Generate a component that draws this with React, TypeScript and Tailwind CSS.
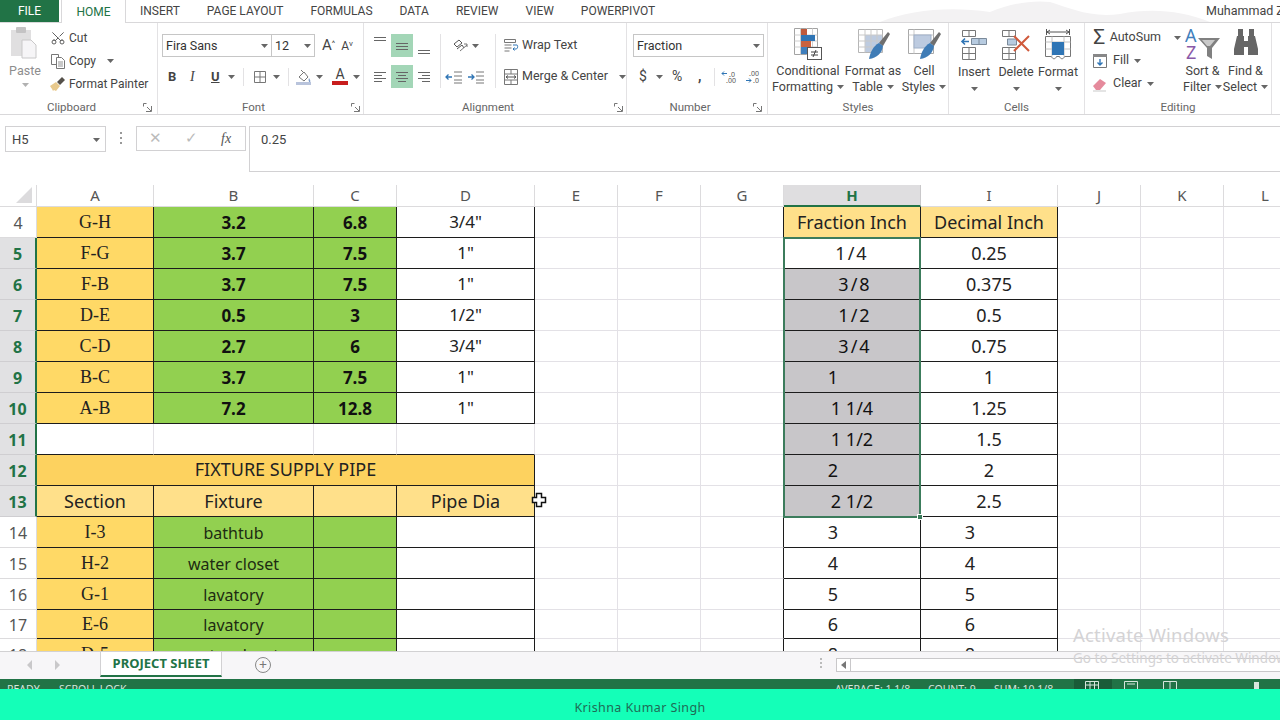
import { Scissors } from "lucide-react";

const ui = "font-['Noto_Sans',sans-serif]";
const rb = "font-['Roboto',sans-serif]";

function Caret({ className = "" }: { className?: string }) {
  return (
    <svg width="7" height="4" viewBox="0 0 7 4" className={`shrink-0 ${className}`}>
      <path d="M0 0h7L3.5 4z" fill="#666" />
    </svg>
  );
}

function PasteIcon() {
  return (
    <svg width="30" height="34" viewBox="0 0 30 34">
      <rect x="1" y="4" width="20" height="26" fill="#e0dfe0" />
      <rect x="6" y="1" width="10" height="6" rx="1" fill="#c4c3c4" />
      <path d="M12 14h9l5 5v13H12z" fill="#f6f5f7" stroke="#c9c8c9" />
    </svg>
  );
}

function CopyIcon() {
  return (
    <svg width="16" height="16" viewBox="0 0 16 16" fill="#fff" stroke="#777" className="shrink-0">
      <path d="M1.5 1.5h7v10h-7z" />
      <path d="M6.5 4.5h5l3 3v8h-8z" />
      <path d="M8 9h5M8 11h5M8 13h5" strokeWidth=".8" />
    </svg>
  );
}

function PainterIcon() {
  return (
    <svg width="16" height="16" viewBox="0 0 16 16" className="shrink-0">
      <path d="M0 10l6-4 4 4-4 5-2-1-1 1-1-2z" fill="#e8c98c" />
      <path d="M7 6l5-5 3 3-5 5z" fill="#55504a" />
    </svg>
  );
}

function Lines({ aligns, y = [] }: { aligns: number[][]; y?: number[] }) {
  return (
    <svg width="16" height="16" viewBox="0 0 16 16" stroke="#666" strokeWidth="1">
      {aligns.map((a, i) => (
        <path key={i} d={`M${a[0]} ${y[i]}.5H${a[1]}`} />
      ))}
    </svg>
  );
}

function Brush() {
  return (
    <>
      <path d="M24 15L33 4l2 2-7 12z" fill="#6f6f6f" />
      <path d="M14 31c1-6 4-13 10-16l4 3c-1 7-6 12-14 13z" fill="#3f7cb6" />
    </>
  );
}

function ConditionalIcon() {
  return (
    <svg width="30" height="32" viewBox="0 0 30 32" className="shrink-0">
      <path d="M1.5 .5h23v26h-23z" fill="#fff" stroke="#a3a3a3" />
      <path d="M1.5 7h23M1.5 13h23M1.5 19h23M7.5 .5v26M13.5 .5v26M19.5 .5v26" stroke="#cfcfcf" />
      <rect x="8" y="1" width="6" height="6" fill="#bf5a3c" />
      <rect x="8" y="7" width="14" height="6" fill="#2f75b5" />
      <rect x="8" y="13" width="10" height="6" fill="#c9623f" />
      <rect x="8" y="19" width="6" height="7" fill="#3f7fbd" />
      <rect x="14.5" y="19.5" width="14" height="12" fill="#fff" stroke="#555" />
      <path d="M18 24h7M18 27h7M23 22l-3 7" stroke="#444" fill="none" />
    </svg>
  );
}

function TableIcon() {
  return (
    <svg width="36" height="32" viewBox="0 0 36 32" className="shrink-0">
      <path d="M3.5 1.5h24v23h-24z" fill="#fff" stroke="#b5b5b5" />
      <rect x="10" y="7" width="17" height="17" fill="#bdcbe0" />
      <path d="M3.5 7h24M3.5 13h24M3.5 19h24M10 1.5v23M16 1.5v23M22 1.5v23" stroke="#c9c9c9" />
      <Brush />
    </svg>
  );
}

function StylesIcon() {
  return (
    <svg width="36" height="32" viewBox="0 0 36 32" className="shrink-0">
      <path d="M2.5 1.5h25v24h-25z" fill="#fff" stroke="#a8a8a8" />
      <path d="M2.5 7h25M8 1.5v24" stroke="#c9c9c9" />
      <rect x="8" y="7" width="17" height="13" fill="#bdcbe0" stroke="#9fb0c8" />
      <Brush />
    </svg>
  );
}

function InsertIcon() {
  return (
    <svg width="28" height="32" viewBox="0 0 28 32" fill="#fff" stroke="#777" className="shrink-0">
      <path d="M2.5 1.5h13v6h-13zM9 1.5v6M2.5 18.5h13v12h-13zM2.5 24.5h13M9 18.5v12" />
      <path d="M11.5 9.5h15v6h-15zM19 9.5v6" fill="#b7cbe0" stroke="#7b8a9a" />
      <path d="M9 12.5H2M5 9.5l-3 3 3 3" stroke="#2f75b5" strokeWidth="1.6" fill="none" />
    </svg>
  );
}

function DeleteIcon() {
  return (
    <svg width="30" height="32" viewBox="0 0 30 32" fill="#fff" stroke="#777" className="shrink-0">
      <path d="M1.5 1.5h13v6h-13zM8 1.5v6M1.5 18.5h13v12h-13zM1.5 24.5h13M8 18.5v12" />
      <path d="M6.5 10h9v6h-9z" fill="#b7cbe0" stroke="#7b8a9a" />
      <path d="M13 7l15 15M28 7L13 22" stroke="#d05a3c" strokeWidth="2" />
    </svg>
  );
}

function FormatIcon() {
  return (
    <svg width="30" height="32" viewBox="0 0 30 32" fill="none" stroke="#777" className="shrink-0">
      <path d="M3.5 0v6M26.5 0v6M4 3h22M7 1l-3 2 3 2M23 1l3 2-3 2" stroke="#555" />
      <path d="M2.5 7.5h25v20h-6c-1 3-4 3-5 0h-3c-1 3-4 3-5 0h-6z" fill="#fff" />
      <path d="M2.5 13h25M2.5 20h25M9 7.5v20M21 7.5v20" stroke="#c2c2c2" />
      <rect x="9" y="13" width="12" height="13" fill="#2f75b5" stroke="none" />
    </svg>
  );
}

function SortIcon() {
  return (
    <svg width="36" height="32" viewBox="0 0 36 32" className="shrink-0">
      <text x="0" y="14" fontSize="18" fontFamily="Noto Sans" fill="#3f7fbd">A</text>
      <text x="1" y="31" fontSize="18" fontFamily="Noto Sans" fill="#8a5aa8">Z</text>
      <path d="M13 10h22l-8 10v11l-5-3v-8z" fill="#808080" />
      <path d="M17 12h13l-5 6h-3z" fill="#c9c9c9" />
    </svg>
  );
}

function BinocularsIcon() {
  return (
    <svg width="26" height="32" viewBox="0 0 26 32" fill="#666" className="shrink-0">
      <rect x="5" y="1" width="5" height="8" />
      <rect x="16" y="1" width="5" height="8" />
      <path d="M4 8h7v5h4V8h7l3 13v6H15v-8h-4v8H1v-6z" />
    </svg>
  );
}

function GroupLabel({ text, launcher = false, right = "right-[3px]" }: { text: string; launcher?: boolean; right?: string }) {
  return (
    <div className={`relative h-[19px] pt-[6px] flex items-center justify-center text-[11.5px] text-[#666] ${launcher ? "pr-[14px]" : ""}`}>
      {text}
      {launcher && (
        <svg width="9" height="9" viewBox="0 0 9 9" className={`absolute top-[8px] ${right}`} fill="none" stroke="#777">
          <path d="M.5.5h3M.5.5v3M8.5 3v5.5H3M4 4l4 4" />
        </svg>
      )}
    </div>
  );
}

function BigButton({ icon, lines, w }: { icon: React.ReactNode; lines: string[]; w: string }) {
  return (
    <div className={`flex flex-col items-center ${w}`}>
      <div className="h-[33px] flex items-center">{icon}</div>
      <div className="mt-[3px] text-[12.5px] leading-[16px] text-[#444] whitespace-nowrap">{lines[0]}</div>
      <div className="text-[12.5px] leading-[16px] text-[#444] whitespace-nowrap flex items-center gap-[4px] h-[16px]">
        {lines[1]}
        <Caret />
      </div>
    </div>
  );
}

function CellButton({ icon, label }: { icon: React.ReactNode; label: string }) {
  return (
    <div className="w-[42px] flex flex-col items-center">
      <div className="h-[33px] flex items-center">{icon}</div>
      <div className="mt-[3px] text-[12.5px] leading-[16px]">{label}</div>
      <Caret className="mt-[7px]" />
    </div>
  );
}

function Ribbon() {
  return (
    <div className={`h-[92px] flex shrink-0 border-b border-[#d9d8da] bg-white ${rb} text-[#444]`}>
      {/* clipboard */}
      <div className="w-[158px] shrink-0 border-r border-[#e3e2e4] flex flex-col">
        <div className="h-[72px] flex pt-[3px]">
          <div className="w-[50px] flex flex-col items-center">
            <PasteIcon />
            <div className="mt-[3px] text-[12.5px] leading-[16px] text-[#8d8d8d]">Paste</div>
            <Caret className="mt-[4px] opacity-50" />
          </div>
          <div className="flex flex-col text-[12px]">
            <div className="h-[23px] flex items-center gap-[3px]">
              <Scissors size={16} strokeWidth={1.4} className="text-[#555] -rotate-90" />
              <span>Cut</span>
            </div>
            <div className="h-[23px] flex items-center gap-[3px]">
              <CopyIcon />
              <span>Copy</span>
              <Caret className="ml-[8px]" />
            </div>
            <div className="h-[23px] flex items-center gap-[3px]">
              <PainterIcon />
              <span className="whitespace-nowrap">Format Painter</span>
            </div>
          </div>
        </div>
        <GroupLabel text="Clipboard" launcher right="right-[5px]" />
      </div>

      {/* font */}
      <div className="w-[206px] shrink-0 border-r border-[#e3e2e4] flex flex-col">
        <div className="h-[72px] pl-[4px] pt-[11px] flex flex-col">
          <div className="h-[23px] flex items-center">
            <div className="w-[110px] h-[23px] border border-[#c6c6c6] flex items-center justify-between pl-[3px] pr-[3px] pt-[1px] text-[12.5px] text-[#333]">
              Fira Sans
              <Caret />
            </div>
            <div className="w-[43px] h-[23px] border border-l-0 border-[#c6c6c6] flex items-center justify-between pl-[3px] pr-[3px] pt-[1px] text-[12.5px] text-[#333]">
              12
              <Caret />
            </div>
            <span className="ml-[7px] text-[15px] leading-none">A<sup className="text-[8px]">^</sup></span>
            <span className="ml-[6px] text-[12px] leading-none">A<sup className="text-[8px]">v</sup></span>
          </div>
          <div className="mt-[8px] h-[23px] flex items-center text-[13px]">
            <span className="ml-[6px] w-[22px] font-bold">B</span>
            <span className="w-[21px] italic font-['Liberation_Serif',serif] text-[14px]">I</span>
            <span className="w-[15px] underline font-bold text-[13px]">U</span>
            <Caret className="ml-[2px]" />
            <div className="ml-[8px] h-[18px] border-l border-[#e3e2e4]" />
            <svg width="16" height="16" viewBox="0 0 16 16" className="ml-[8px]" fill="none" stroke="#777">
              <path d="M2.5 2.5h11v11h-11zM8 2.5v11M2.5 8h11" />
            </svg>
            <Caret className="ml-[5px]" />
            <div className="ml-[8px] h-[18px] border-l border-[#e3e2e4]" />
            <svg width="18" height="18" viewBox="0 0 18 18" className="ml-[6px]">
              <path d="M4 9l5-5 4 5-4 4z" fill="#fff" stroke="#777" />
              <path d="M6 2l3 3" stroke="#777" />
              <path d="M14 10c1 2 2 3 1 4s-2-2-1-4z" fill="#7d9cc9" />
              <rect x="1" y="14" width="15" height="3" fill="#b9c4dc" />
            </svg>
            <Caret className="ml-[3px]" />
            <div className="ml-[9px] w-[16px] flex flex-col items-center leading-none">
              <span className="text-[14px] leading-[13px] text-[#444]">A</span>
              <span className="w-[16px] h-[4px] bg-[#c81e1e]" />
            </div>
            <Caret className="ml-[5px]" />
          </div>
        </div>
        <GroupLabel text="Font" launcher right="right-[3px]" />
      </div>

      {/* alignment */}
      <div className="w-[263px] shrink-0 border-r border-[#e3e2e4] flex flex-col">
        <div className="h-[72px] pt-[11px] pl-[5px] flex">
          <div className="grid grid-cols-[22px_22px_22px] grid-rows-[23px_23px] gap-y-[8px]">
            <div className="flex items-start justify-center pt-[1px]"><Lines aligns={[[2, 14], [2, 14]]} y={[2, 5]} /></div>
            <div className="bg-[#a3d6b7] flex items-center justify-center"><Lines aligns={[[2, 14], [2, 14], [2, 14]]} y={[5, 8, 11]} /></div>
            <div className="flex items-end justify-center"><Lines aligns={[[2, 14], [2, 14]]} y={[9, 12]} /></div>
            <div className="flex items-center justify-center"><Lines aligns={[[2, 14], [2, 10], [2, 14], [2, 10]]} y={[3, 6, 9, 12]} /></div>
            <div className="bg-[#a3d6b7] flex items-center justify-center"><Lines aligns={[[2, 14], [4, 12], [2, 14], [4, 12]]} y={[3, 6, 9, 12]} /></div>
            <div className="flex items-center justify-center"><Lines aligns={[[2, 14], [6, 14], [2, 14], [6, 14]]} y={[3, 6, 9, 12]} /></div>
          </div>
          <div className="ml-[5px] w-[55px] border-l border-[#e3e2e4] h-[54px] flex flex-col">
            <div className="h-[23px] flex items-center pl-[10px] gap-[3px]">
              <svg width="18" height="16" viewBox="0 0 18 16" fill="none" stroke="#555">
                <path d="M3 6l5-4 3 3-5 4zM6 11l5-4 2 3" />
                <path d="M9 13l7-6M13 6h3v3" stroke="#777" />
              </svg>
              <Caret />
            </div>
            <div className="h-[8px]" />
            <div className="h-[23px] flex items-center pl-[4px] gap-[4px]">
              <svg width="18" height="16" viewBox="0 0 18 16" fill="none" stroke="#777">
                <path d="M9 3h8M9 7h8M9 11h8M9 14h8" />
                <path d="M7 8H1M3.5 5.5L1 8l2.5 2.5" stroke="#2f75b5" strokeWidth="1.3" />
              </svg>
              <svg width="18" height="16" viewBox="0 0 18 16" fill="none" stroke="#777">
                <path d="M9 3h8M9 7h8M9 11h8M9 14h8" />
                <path d="M1 8h6M4.5 5.5L7 8l-2.5 2.5" stroke="#2f75b5" strokeWidth="1.3" />
              </svg>
            </div>
          </div>
          <div className="w-[122px] border-l border-[#e3e2e4] h-[54px] flex flex-col pl-[7px] text-[12.5px]">
            <div className="h-[23px] flex items-center gap-[3px] whitespace-nowrap">
              <svg width="16" height="16" viewBox="0 0 16 16" fill="none" stroke="#777" className="shrink-0">
                <path d="M1.5 1.5h11v3h-11zM1.5 7h7M1.5 10h7M1.5 13h5" />
                <path d="M10 7h4c1 0 1 4-1 4h-3M11.5 9.5L10 11l1.5 1.5" stroke="#2f75b5" />
              </svg>
              Wrap Text
            </div>
            <div className="h-[8px]" />
            <div className="h-[23px] flex items-center gap-[3px] whitespace-nowrap">
              <svg width="16" height="18" viewBox="0 0 16 18" fill="none" stroke="#777" className="shrink-0">
                <path d="M1.5 1.5h13v15h-13zM1.5 6h13M1.5 12h13M8 1.5V6M8 12v4.5" />
                <path d="M3 9h10M5 7.5L3 9l2 1.5M11 7.5L13 9l-2 1.5" stroke="#555" />
              </svg>
              Merge &amp; Center
              <Caret className="ml-[8px]" />
            </div>
          </div>
        </div>
        <GroupLabel text="Alignment" launcher right="right-[3px]" />
      </div>

      {/* number */}
      <div className="w-[141px] shrink-0 border-r border-[#e3e2e4] flex flex-col">
        <div className="h-[72px] pl-[6px] pt-[11px] flex flex-col">
          <div className="w-[131px] h-[23px] border border-[#c6c6c6] flex items-center justify-between px-[3px] pt-[1px] text-[12.5px] text-[#333]">
            Fraction
            <Caret />
          </div>
          <div className="mt-[8px] h-[23px] flex items-center text-[14px]">
            <span className="ml-[6px] w-[14px]">$</span>
            <Caret className="ml-[3px]" />
            <span className="ml-[9px] w-[18px]">%</span>
            <span className="ml-[8px] w-[12px] font-bold">,</span>
            <div className="ml-[4px] h-[18px] border-l border-[#e3e2e4]" />
            <svg width="16" height="14" viewBox="0 0 16 14" className="ml-[6px]">
              <path d="M1 3.5h5M1 3.5l2-2M1 3.5l2 2" stroke="#2f75b5" fill="none" />
              <text x="8" y="7" fontSize="7" fontFamily="Noto Sans" fill="#555">.0</text>
              <text x="5" y="13" fontSize="7" fontFamily="Noto Sans" fill="#555">.00</text>
            </svg>
            <svg width="16" height="14" viewBox="0 0 16 14" className="ml-[8px]">
              <text x="4" y="6" fontSize="7" fontFamily="Noto Sans" fill="#555">.00</text>
              <path d="M1 10.5h5M6 10.5l-2-2M6 10.5l-2 2" stroke="#2f75b5" fill="none" />
              <text x="8" y="13" fontSize="7" fontFamily="Noto Sans" fill="#555">.0</text>
            </svg>
          </div>
        </div>
        <GroupLabel text="Number" launcher right="right-[5px]" />
      </div>

      {/* styles */}
      <div className="w-[181px] shrink-0 border-r border-[#e3e2e4] flex flex-col">
        <div className="h-[72px] pl-[4px] pt-[5px] flex">
          <BigButton icon={<ConditionalIcon />} lines={["Conditional", "Formatting"]} w="w-[72px]" />
          <BigButton icon={<TableIcon />} lines={["Format as", "Table"]} w="w-[58px]" />
          <BigButton icon={<StylesIcon />} lines={["Cell", "Styles"]} w="w-[44px]" />
        </div>
        <GroupLabel text="Styles" />
      </div>

      {/* cells */}
      <div className="w-[136px] shrink-0 border-r border-[#e3e2e4] flex flex-col">
        <div className="h-[72px] pl-[4px] pt-[5px] flex">
          <CellButton icon={<InsertIcon />} label="Insert" />
          <CellButton icon={<DeleteIcon />} label="Delete" />
          <CellButton icon={<FormatIcon />} label="Format" />
        </div>
        <GroupLabel text="Cells" />
      </div>

      {/* editing */}
      <div className="w-[187px] shrink-0 border-r border-[#e3e2e4] flex flex-col">
        <div className="h-[72px] pt-[3px] pl-[7px] flex">
          <div className="w-[89px] flex flex-col text-[12.5px]">
            <div className="h-[23px] flex items-center gap-[3px]">
              <span className="w-[18px] text-[21px] leading-none text-[#444] text-center">Σ</span>
              AutoSum
              <Caret className="ml-[10px]" />
            </div>
            <div className="h-[23px] flex items-center gap-[5px]">
              <svg width="16" height="16" viewBox="0 0 16 16" fill="none">
                <path d="M1.5 3.5h13v11h-13z" stroke="#777" fill="#fff" />
                <rect x="1" y="1" width="14" height="3" fill="#888" />
                <path d="M8 6v6M5.5 9.5L8 12l2.5-2.5" stroke="#2f75b5" strokeWidth="1.4" />
              </svg>
              Fill
              <Caret />
            </div>
            <div className="h-[23px] flex items-center gap-[5px]">
              <svg width="16" height="16" viewBox="0 0 16 16">
                <path d="M1 10l7-7 6 4-6 7H4z" fill="#e58a9c" />
                <path d="M1 15h13" stroke="#c9c9c9" />
              </svg>
              Clear
              <Caret />
            </div>
          </div>
          <div className="mt-[2px] flex">
            <BigButton icon={<SortIcon />} lines={["Sort &", "Filter"]} w="w-[43px]" />
            <BigButton icon={<BinocularsIcon />} lines={["Find &", "Select"]} w="w-[43px]" />
          </div>
        </div>
        <GroupLabel text="Editing" />
      </div>
    </div>
  );
}

const gridLine = "border-r border-b border-[#e3e1e6]";
const black = "border-r border-b border-[#1c1c1c]";
const beforeTable = "border-r border-b border-r-[#1c1c1c] border-b-[#e3e1e6]";
const aboveTable = "border-r border-b border-r-[#e3e1e6] border-b-[#1c1c1c]";
const center = "flex items-center justify-center overflow-hidden whitespace-nowrap";
const yellow = `${center} ${black} bg-[#ffd966] pt-[1px] font-['Liberation_Serif',serif] text-[18px] text-[#222]`;
const green = `${center} ${black} bg-[#92d050] pt-[1px] font-bold text-[#111]`;
const fixture = `${center} ${black} bg-[#92d050] pt-[1px] text-[16px] text-[#1d2b12]`;
const plain = `${center} ${black} bg-white text-[#222]`;
const num = `${plain} text-[18px]`;
const header = `${center} ${black} bg-[#ffe08a] text-[18px] text-[#222]`;
const grey = `${center} ${black} bg-[#c8c6c9] text-[18px] text-[#111]`;
const leftShift = "pr-[38px]";
const nudge = "pl-[6px] tracking-[2px]";

type Row = {
  n: number;
  sel?: boolean;
  left: React.ReactNode;
  h: string;
  i: string;
  hc: string;
  ic: string;
};

function Cell({ c, t }: { c: string; t?: string }) {
  return <div className={c}>{t}</div>;
}

function ABCD(a: string, b: string, c: string, d: string) {
  return (
    <>
      <Cell c={yellow} t={a} />
      <Cell c={green} t={b} />
      <Cell c={green} t={c} />
      <Cell c={plain} t={d} />
    </>
  );
}

function Fixt(a: string, b: string) {
  return (
    <>
      <Cell c={yellow} t={a} />
      <Cell c={fixture} t={b} />
      <Cell c={fixture} />
      <Cell c={plain} />
    </>
  );
}

const rows: Row[] = [
  { n: 4, left: ABCD("G-H", "3.2", "6.8", '3/4"'), h: "Fraction Inch", i: "Decimal Inch", hc: header, ic: header },
  { n: 5, sel: true, left: ABCD("F-G", "3.7", "7.5", '1"'), h: "1/4", i: "0.25", hc: `${num} tracking-[2px]`, ic: num },
  { n: 6, sel: true, left: ABCD("F-B", "3.7", "7.5", '1"'), h: "3/8", i: "0.375", hc: `${grey} ${nudge}`, ic: num },
  { n: 7, sel: true, left: ABCD("D-E", "0.5", "3", '1/2"'), h: "1/2", i: "0.5", hc: `${grey} ${nudge}`, ic: num },
  { n: 8, sel: true, left: ABCD("C-D", "2.7", "6", '3/4"'), h: "3/4", i: "0.75", hc: `${grey} ${nudge}`, ic: num },
  { n: 9, sel: true, left: ABCD("B-C", "3.7", "7.5", '1"'), h: "1", i: "1", hc: `${grey} ${leftShift}`, ic: num },
  { n: 10, sel: true, left: ABCD("A-B", "7.2", "12.8", '1"'), h: "1 1/4", i: "1.25", hc: grey, ic: num },
  {
    n: 11,
    sel: true,
    left: (
      <>
        <div className={`${aboveTable} bg-white`} />
        <div className={`${aboveTable} bg-white`} />
        <div className={`${aboveTable} bg-white`} />
        <div className={`${aboveTable} bg-white`} />
      </>
    ),
    h: "1 1/2",
    i: "1.5",
    hc: grey,
    ic: num,
  },
  {
    n: 12,
    sel: true,
    left: <div className={`${center} ${black} col-span-4 bg-[#fdd25f] pb-[2px] text-[18px] text-[#222]`}>FIXTURE SUPPLY PIPE</div>,
    h: "2",
    i: "2",
    hc: `${grey} ${leftShift}`,
    ic: num,
  },
  {
    n: 13,
    sel: true,
    left: (
      <>
        <Cell c={header} t="Section" />
        <Cell c={header} t="Fixture" />
        <Cell c={header} />
        <Cell c={header} t="Pipe Dia" />
      </>
    ),
    h: "2 1/2",
    i: "2.5",
    hc: grey,
    ic: num,
  },
  { n: 14, left: Fixt("I-3", "bathtub"), h: "3", i: "3", hc: `${num} ${leftShift}`, ic: `${num} ${leftShift}` },
  { n: 15, left: Fixt("H-2", "water closet"), h: "4", i: "4", hc: `${num} ${leftShift}`, ic: `${num} ${leftShift}` },
  { n: 16, left: Fixt("G-1", "lavatory"), h: "5", i: "5", hc: `${num} ${leftShift}`, ic: `${num} ${leftShift}` },
  { n: 17, left: Fixt("E-6", "lavatory"), h: "6", i: "6", hc: `${num} ${leftShift}`, ic: `${num} ${leftShift}` },
  { n: 18, left: Fixt("D-5", "water closet"), h: "8", i: "8", hc: `${num} ${leftShift}`, ic: `${num} ${leftShift}` },
];

const colHead = "flex items-center justify-center border-r border-b border-[#dcdbdd] text-[15px] text-[#555]";

function Rowline({ r }: { r: Row }) {
  return (
    <>
      {r.sel ? (
        <div className="flex items-center justify-center border-r-2 border-b border-r-[#217346] border-b-[#cfced1] bg-[#e1e1e3] pt-[2px] text-[16px] font-bold text-[#217346]">{r.n}</div>
      ) : (
        <div className="flex items-center justify-center border-r border-b border-[#dcdbdd] pt-[2px] text-[16px] text-[#555]">{r.n}</div>
      )}
      {r.left}
      <div className={gridLine} />
      <div className={gridLine} />
      <div className={beforeTable} />
      <Cell c={r.hc} t={r.h} />
      <Cell c={r.ic} t={r.i} />
      <div className={gridLine} />
      <div className={gridLine} />
      <div className={gridLine} />
    </>
  );
}

function Sheet() {
  return (
    <div className={`relative h-[466px] shrink-0 overflow-hidden bg-white ${ui} text-[17px]`}>
      <div className="w-[1307px] grid grid-cols-[37px_117px_160px_83px_138px_83px_83px_83px_137px_137px_83px_83px_83px] grid-rows-[22px_31px_31px_31px_31px_31px_31px_31px_31px_31px_31px_31px_31px_31px_29px_31px]">
        <div className="flex items-end justify-end border-r border-b border-[#dcdbdd] pr-[4px] pb-[3px]">
          <svg width="16" height="16" viewBox="0 0 16 16">
            <path d="M16 0v16H0z" fill="#dcdbdd" />
          </svg>
        </div>
        {["A", "B", "C", "D", "E", "F", "G"].map((c) => (
          <div key={c} className={colHead}>{c}</div>
        ))}
        <div className="flex items-center justify-center border-r border-b-2 border-r-[#c9c8ca] border-b-[#217346] bg-[#dfdee0] text-[15px] font-bold text-[#217346]">H</div>
        {["I", "J", "K", "L"].map((c) => (
          <div key={c} className={colHead}>{c}</div>
        ))}
        {rows.map((r) => (
          <Rowline key={r.n} r={r} />
        ))}
      </div>

      {/* selection outline and mouse cursor */}
      <div className="absolute left-[783px] top-[52px] w-[138px] h-[281px] border-2 border-[#3c7c5c] pointer-events-none">
        <div className="absolute right-[-4px] bottom-[-4px] w-[6px] h-[6px] bg-[#3c7c5c] border border-white" />
      </div>
      <svg width="16" height="16" viewBox="0 0 16 16" className="absolute left-[531px] top-[307px]">
        <path d="M5.5 1.5h5v4h4v5h-4v4h-5v-4h-4v-5h4z" fill="#fff" stroke="#111" strokeWidth="1.5" />
      </svg>
      <div className="absolute left-[1073px] top-[438px] text-[18.5px] text-[#d4d3d5] leading-[24px] tracking-[0.2px] whitespace-nowrap">Activate Windows</div>
    </div>
  );
}

export default function App() {
  return (
    <div className={`w-[1280px] h-[720px] flex flex-col overflow-hidden bg-white ${ui}`}>
      {/* tab strip */}
      <div className={`relative h-[23px] shrink-0 flex items-stretch border-b border-[#d9d8da] text-[12px] text-[#444] ${rb}`}>
        <svg width="330" height="22" viewBox="0 0 330 22" className="absolute left-[880px] top-0" fill="#f3f2f3">
          <path d="M0 22C30 10 70 6 110 12 130 4 150 0 170 2 190 8 210 18 240 14 270 8 300 10 330 22z" />
        </svg>
        <div className="relative w-[59px] h-[22px] bg-[#217346] text-white flex items-center justify-center">FILE</div>
        <div className="relative w-[65px] h-[23px] ml-[2px] bg-white border-x border-[#d9d8da] text-[#217346] flex items-center justify-center">HOME</div>
        <div className="relative ml-[14px] flex items-center gap-[27px]">
          <span>INSERT</span>
          <span>PAGE LAYOUT</span>
          <span>FORMULAS</span>
          <span>DATA</span>
          <span>REVIEW</span>
          <span>VIEW</span>
          <span>POWERPIVOT</span>
        </div>
        <div className="relative ml-auto flex items-center whitespace-nowrap w-[74px] overflow-hidden text-[12.5px]">Muhammad Z</div>
      </div>

      <Ribbon />

      {/* formula bar */}
      <div className={`h-[70px] shrink-0 flex pt-[11px] text-[13px] text-[#444] ${rb}`}>
        <div className="ml-[5px] w-[101px] h-[26px] border border-[#d2d1d3] flex items-center justify-between pl-[6px] pr-[5px] pt-[1px]">
          H5
          <Caret />
        </div>
        <div className="ml-[14px] h-[24px] flex flex-col justify-center gap-[3px]">
          <span className="w-[2px] h-[2px] bg-[#999]" />
          <span className="w-[2px] h-[2px] bg-[#999]" />
          <span className="w-[2px] h-[2px] bg-[#999]" />
        </div>
        <div className="ml-[14px] w-[110px] h-[25px] border border-[#d2d1d3] flex items-center pl-[12px] text-[#bbb]">
          <span className="text-[15px] w-[36px]">✕</span>
          <span className="text-[15px] w-[36px]">✓</span>
          <span className="italic font-['Liberation_Serif',serif] text-[14px] text-[#555]">fx</span>
        </div>
        <div className="ml-[3px] flex-1 h-[46px] border border-r-0 border-[#d2d1d3] pl-[11px] pt-[3px]">0.25</div>
      </div>

      <Sheet />

      {/* sheet tabs */}
      <div className="relative h-[28px] shrink-0 flex items-start border-t border-[#d2d1d3] bg-[#f7f6f8] text-[#aaa]">
        <svg width="40" height="10" viewBox="0 0 40 10" className="ml-[27px] mt-[8px] shrink-0" fill="#c9c8ca">
          <path d="M5 0v10L0 5zM28 0v10l5-5z" />
        </svg>
        <div className="ml-[33px] w-[122px] h-[25px] bg-white border-x border-b-2 border-x-[#d2d1d3] border-b-[#217346] flex items-center justify-center text-[13px] font-bold text-[#217346] whitespace-nowrap">PROJECT SHEET</div>
        <div className="ml-[33px] mt-[5px] w-[16px] h-[16px] rounded-full border border-[#888] flex items-center justify-center text-[14px] leading-none text-[#777]">+</div>
        <div className="ml-[549px] mt-[6px] flex flex-col gap-[2px]">
          <span className="w-[2px] h-[2px] bg-[#bbb]" />
          <span className="w-[2px] h-[2px] bg-[#bbb]" />
          <span className="w-[2px] h-[2px] bg-[#bbb]" />
        </div>
        <div className="ml-[14px] mt-[6px] flex-1 h-[14px] border border-r-0 border-[#c9c8ca] bg-white flex">
          <div className="w-[14px] border-r border-[#c9c8ca] flex items-center justify-center">
            <svg width="5" height="8" viewBox="0 0 5 8" fill="#777"><path d="M5 0v8L0 4z" /></svg>
          </div>
        </div>
        <div className="absolute left-[1073px] top-[-4px] text-[13.5px] text-[#d4d3d5] whitespace-nowrap">Go to Settings to activate Windows.</div>
      </div>

      {/* status bar, cut off by the caption strip */}
      <div className="relative h-[10px] shrink-0 overflow-hidden bg-[#217346] text-[10.5px] leading-[14px] text-[#d7e6dd]">
        <span className="absolute left-[7px] top-[3px]">READY</span>
        <span className="absolute left-[59px] top-[3px]">SCROLL LOCK</span>
        <span className="absolute left-[835px] top-[3px]">AVERAGE: 1 1/8</span>
        <span className="absolute left-[928px] top-[3px]">COUNT: 9</span>
        <span className="absolute left-[994px] top-[3px]">SUM: 10 1/8</span>
        <div className="absolute left-[1074px] top-0 w-[38px] h-[10px] bg-[#1a5c38]" />
        <svg width="170" height="10" viewBox="0 0 170 10" className="absolute left-[1085px] top-[1px]" fill="none" stroke="#d7e6dd">
          <path d="M.5 1.5h13v9H.5zM.5 5h13M5 1.5v9M9.5 1.5v9" />
          <path d="M39.5 1.5h13v9h-13zM42 4h8" />
          <path d="M78.5 1.5h13v9h-13zM85 1.5v9" />
        </svg>
        <div className="absolute left-[1254px] top-[3px] w-[5px] h-[8px] bg-[#d7e6dd]" />
      </div>

      {/* caption strip */}
      <div className="h-[31px] shrink-0 bg-[#14ffb8] flex items-end justify-center pb-[2px] text-[12.5px] tracking-[0.4px] text-[#1f6b55]">
        Krishna Kumar Singh
      </div>
    </div>
  );
}
